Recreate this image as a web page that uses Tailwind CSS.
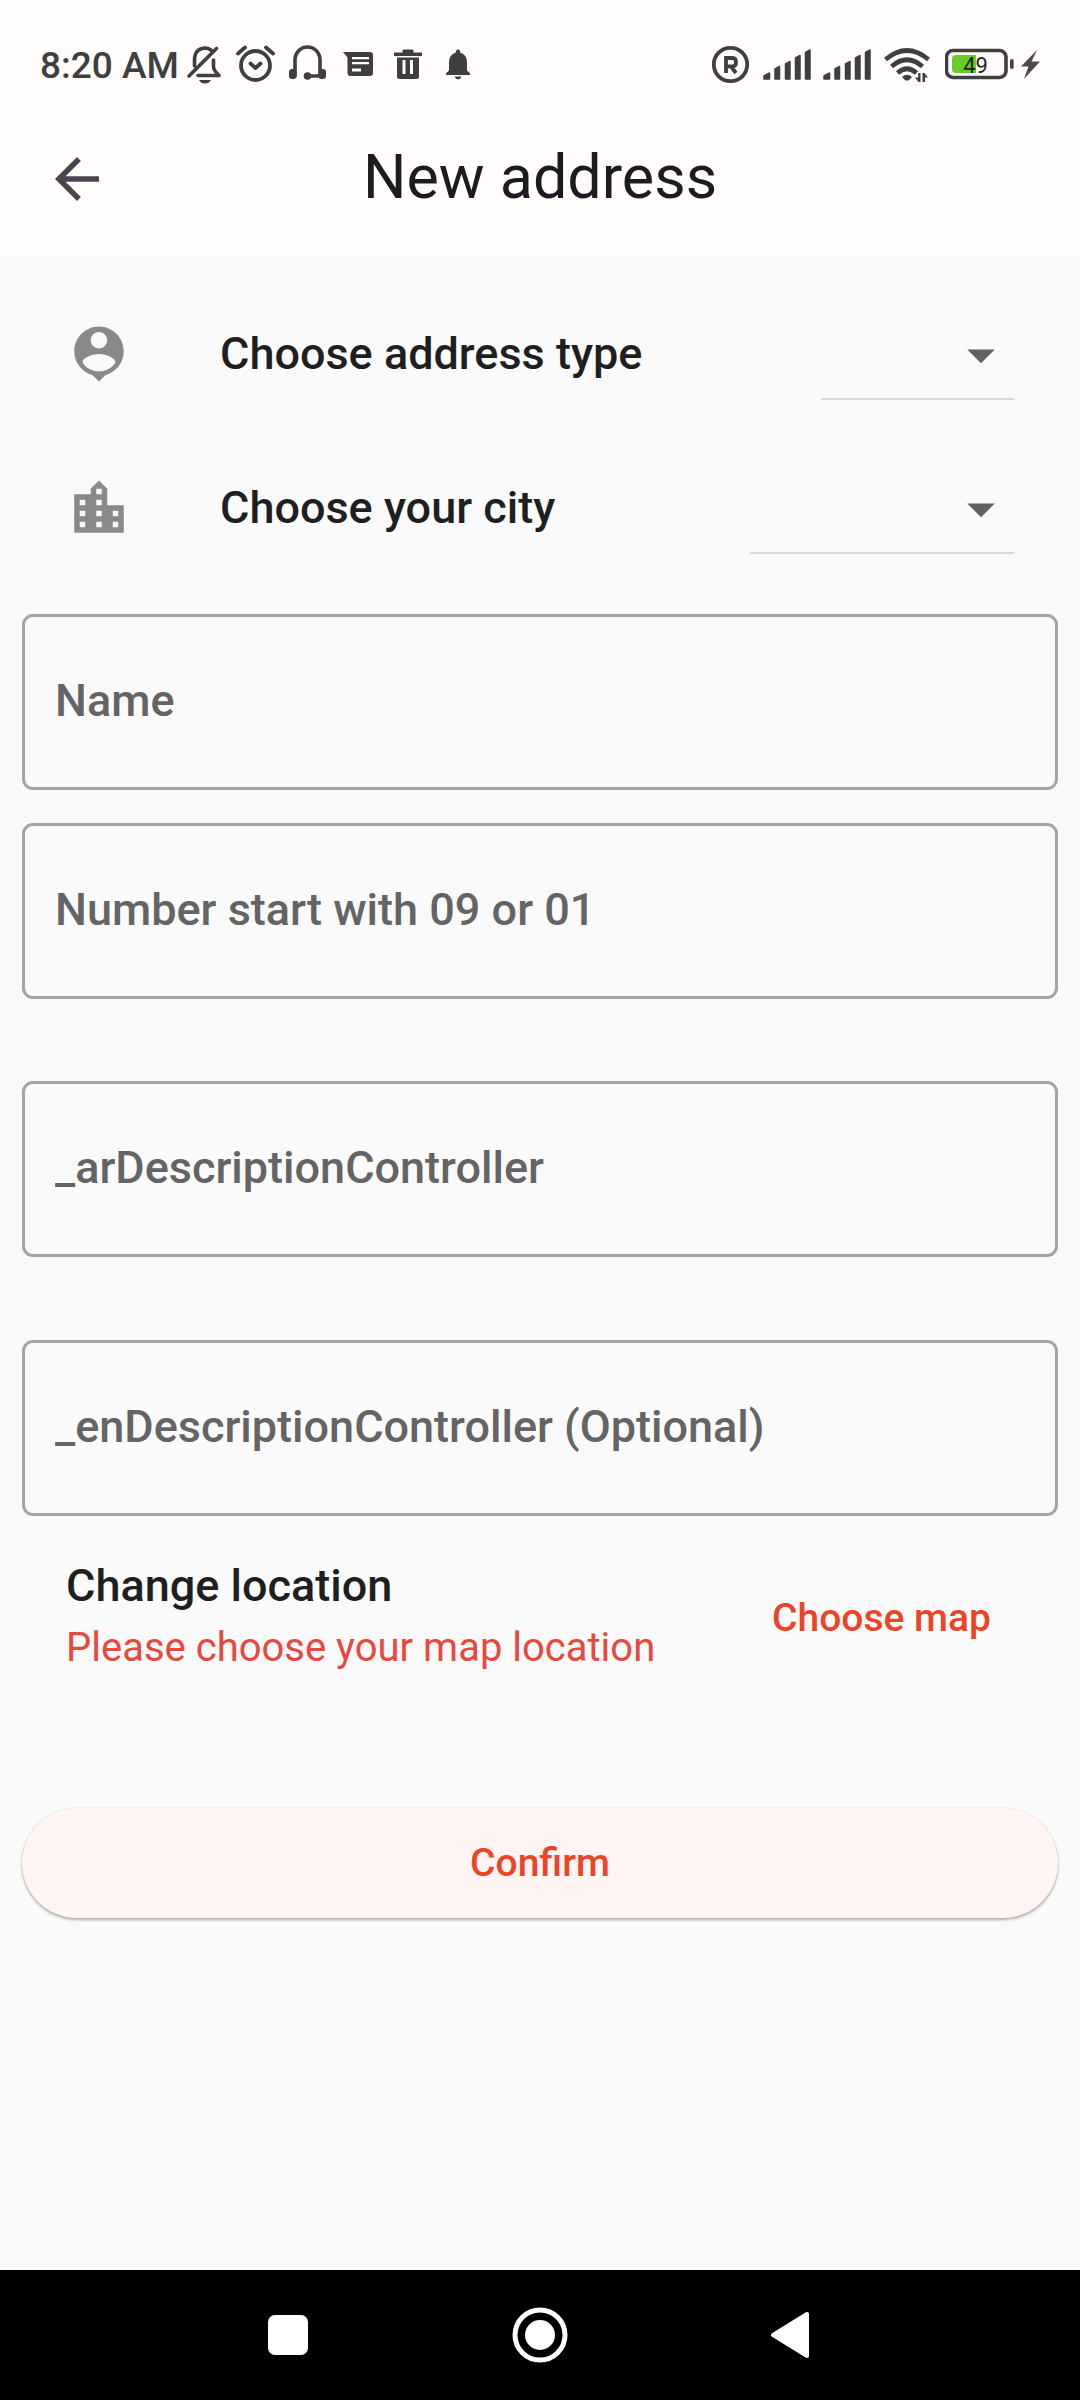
<!DOCTYPE html>
<html lang="en">
<head>
<meta charset="utf-8">
<meta name="viewport" content="width=device-width, initial-scale=1">
<title>New address</title>
<script src="https://cdn.jsdelivr.net/npm/@tailwindcss/browser@4"></script>
</head>
<body class="flex min-h-screen flex-col bg-[#fafafa] font-[Roboto,sans-serif] text-[#1f1f1f]">

<!-- Status bar and app bar -->
<header class="bg-[#fffcfb]">
  <div class="flex h-[102px] items-end justify-between pr-[39px] pb-[14px] pl-10 text-[#3f3f3f]">
    <div class="flex h-12 items-center">
      <span class="w-[146px] pt-1 text-[37px] leading-[44px] font-medium whitespace-nowrap">8:20 AM</span>
      <!-- muted bell -->
      <svg class="h-11 w-9" viewBox="186 42 36 44" fill="none" stroke="currentColor" stroke-width="3.6" stroke-linecap="round" stroke-linejoin="round" aria-hidden="true">
        <path d="M194.500 66V60q0-11 10-12 4 0 6.500 2M189 76L216.500 48.500M213.500 60v7q0 3 5.500 8.500H198"/>
        <path d="M199 80h12q-2 3.500-6 3.500t-6-3.500z" fill="currentColor" stroke="none"/>
      </svg>
      <!-- alarm -->
      <svg class="ml-[13px] h-11 w-10" viewBox="235 42 40 44" fill="none" stroke="currentColor" stroke-width="3.800" stroke-linecap="round" stroke-linejoin="round" aria-hidden="true">
        <circle cx="255.500" cy="65.500" r="14.500"/>
        <path d="M250.500 63.500l5 4.500 5-4.500M238 53.500l7-6M273 53.500l-7-6"/>
      </svg>
      <!-- headset -->
      <svg class="ml-[13px] h-11 w-10" viewBox="289 42 40 44" fill="none" stroke="currentColor" stroke-width="3.600" stroke-linecap="round" aria-hidden="true">
        <path d="M296 76V60a12.500 13 0 0 1 25 0v16M308 76h12"/>
        <circle cx="308.500" cy="76" r="3.800" fill="currentColor" stroke="none"/>
        <rect x="290" y="69" width="7.500" height="10" rx="3" fill="currentColor" stroke="none"/>
        <rect x="319.500" y="69" width="7.500" height="10" rx="3" fill="currentColor" stroke="none"/>
      </svg>
      <!-- message -->
      <svg class="ml-[13px] h-11 w-8" viewBox="343 42 32 44" fill="currentColor" aria-hidden="true">
        <path fill-rule="evenodd" d="M345 52H372q3 0 3 3V73q0 3-3 3H352.500q-3 0-3-3V57.500zM354 57v2.200h17V57zM354 62v2.200h17V62zM354 68.500v3h9v-3z"/>
      </svg>
      <!-- bin -->
      <svg class="ml-5 h-11 w-8" viewBox="395 42 32 44" fill="currentColor" aria-hidden="true">
        <path fill-rule="evenodd" d="M396 52.500h8.500v-1.500q0-1.500 1.500-1.500h8q1.500 0 1.500 1.500v1.500H424v3.500H396zM399 57.500h22V76.500q0 2.500-2.500 2.500h-17q-2.500 0-2.500-2.500zM404.500 60v14h3V60zM412 60v14h3V60z"/>
      </svg>
      <!-- bell -->
      <svg class="ml-5 h-11 w-7" viewBox="447 42 28 44" fill="currentColor" aria-hidden="true">
        <path d="M460 49.500q2.200 0 2.200 3 6.800 2 6.800 10v8l3 2.700V75H448v-1.800l3-2.700v-8q0-8 6.800-10 0-3 2.200-3zM456.500 76.500h7q-1 2.800-3.500 2.800t-3.500-2.800z"/>
      </svg>
    </div>

    <div class="flex h-12 items-center">
      <!-- roaming -->
      <svg class="h-11 w-10" viewBox="711 42 40 44" fill="none" stroke="currentColor" stroke-width="3.800" aria-hidden="true">
        <circle cx="730.500" cy="64.500" r="16.700"/>
        <path d="M726 73V58h6.500q3.500 0 3.500 4.200t-3.500 4.200H726M731 66.500l5 6.500"/>
      </svg>
      <!-- signal, SIM 1 -->
      <svg class="ml-3 h-11 w-12" viewBox="763 42 48 44" fill="currentColor" stroke="currentColor" stroke-width="1.500" stroke-linejoin="round" aria-hidden="true">
        <path d="M764 76l5.500-3v6H764zM775 69l4.500-2.500V79H775zM785.500 64l4.500-2.500V79h-4.500zM795.500 58l4.500-2.500V79h-4.500zM805.500 52.500l4.500-2.500V79h-4.500z"/>
      </svg>
      <!-- signal, SIM 2 -->
      <svg class="ml-3 h-11 w-12" viewBox="763 42 48 44" fill="currentColor" stroke="currentColor" stroke-width="1.500" stroke-linejoin="round" aria-hidden="true">
        <path d="M764 76l5.500-3v6H764zM775 69l4.500-2.500V79H775zM785.500 64l4.500-2.500V79h-4.500zM795.500 58l4.500-2.500V79h-4.500zM805.500 52.500l4.500-2.500V79h-4.500z"/>
      </svg>
      <!-- wifi -->
      <svg class="ml-3 h-11 w-12" viewBox="883 42 48 44" fill="none" stroke="currentColor" stroke-width="4.600" aria-hidden="true">
        <path d="M885.500 59.500q21.500-18 43 0M891.500 66.500q15.500-13.500 31 0M897.500 73q9.500-8.500 19 0"/>
        <path d="M902 77q5-4.500 10 0l-3.500 3.500h-3zM915 77.500h3.200V73h2.300v9h-2zM922.500 73h2l3.500 4.500h-3V82h-2.500z" fill="currentColor" stroke="none"/>
      </svg>
      <!-- battery -->
      <svg class="ml-3.5 h-11 w-[70px]" viewBox="945 42 70 44" aria-hidden="true">
        <rect x="946.500" y="50.500" width="59.500" height="27" rx="6.500" fill="none" stroke="#3f3f3f" stroke-width="3.600"/>
        <path d="M976 55v18h-20q-4 0-4-4v-10q0-4 4-4z" fill="#67cb29"/>
        <rect x="1010" y="59" width="3.600" height="10" rx="1.800" fill="#3f3f3f"/>
        <text x="975.500" y="72.500" text-anchor="middle" font-family="Roboto, sans-serif" font-size="22" fill="#222">49</text>
      </svg>
      <!-- charging -->
      <svg class="ml-1.5 h-11 w-5" viewBox="1021 42 20 44" fill="#4a4a4a" aria-hidden="true">
        <path d="M1037 50L1021 66.500h7.500L1024 79l16-17.500h-8.500z"/>
      </svg>
    </div>
  </div>

  <div class="grid h-[154px] grid-cols-[66px_1fr_66px] items-center px-11">
    <button type="button" aria-label="Back">
      <svg class="size-[66px]" viewBox="0 0 24 24" fill="#49454f" aria-hidden="true"><path d="M20 11H7.830l5.590-5.590L12 4l-8 8 8 8 1.410-1.410L7.830 13H20v-2z"/></svg>
    </button>
    <h1 class="pb-1 text-center text-[61px] leading-[76px] text-[#1c1b1f]">New address</h1>
  </div>
</header>

<main class="flex-1 px-[22px] pt-[21px]">
  <form>
    <div class="px-11 text-[45px] font-medium">
      <div class="flex h-[154px] items-center">
        <svg class="size-[66px]" viewBox="0 0 24 24" fill="#898989" aria-hidden="true"><path d="M12 2c-4.970 0-9 4.030-9 9 0 4.170 2.840 7.670 6.690 8.690L12 22l2.310-2.310C18.160 18.670 21 15.170 21 11c0-4.970-4.030-9-9-9zm0 2c1.660 0 3 1.340 3 3s-1.340 3-3 3-3-1.340-3-3 1.340-3 3-3zm0 14.300c-2.500 0-4.710-1.280-6-3.220.03-1.990 4-3.080 6-3.080 1.990 0 5.970 1.090 6 3.080-1.290 1.940-3.500 3.220-6 3.220z"/></svg>
        <label for="type" class="ml-22 flex-1">Choose address type</label>
        <div class="relative">
          <select id="type" class="block h-[92px] w-[193px] appearance-none border-b-2 border-[#d9d9d9] pr-[66px] outline-none"></select>
          <svg class="pointer-events-none absolute top-3.5 right-0 size-[66px]" viewBox="0 0 24 24" fill="#616161" aria-hidden="true"><path d="M7 10l5 5 5-5z"/></svg>
        </div>
      </div>
      <div class="flex h-[154px] items-center">
        <svg class="size-[66px]" viewBox="0 0 24 24" fill="#898989" aria-hidden="true"><path d="M15 11V5l-3-3-3 3v2H3v14h18V11h-6zm-8 8H5v-2h2v2zm0-4H5v-2h2v2zm0-4H5V9h2v2zm6 8h-2v-2h2v2zm0-4h-2v-2h2v2zm0-4h-2V9h2v2zm0-4h-2V5h2v2zm6 12h-2v-2h2v2zm0-4h-2v-2h2v2z"/></svg>
        <label for="city" class="ml-22 flex-1">Choose your city</label>
        <div class="relative">
          <select id="city" class="block h-[92px] w-[264px] appearance-none border-b-2 border-[#d9d9d9] pr-[66px] outline-none"></select>
          <svg class="pointer-events-none absolute top-3.5 right-0 size-[66px]" viewBox="0 0 24 24" fill="#616161" aria-hidden="true"><path d="M7 10l5 5 5-5z"/></svg>
        </div>
      </div>
    </div>

    <div class="mt-[29px] text-[45px] font-medium">
      <input type="text" aria-label="Name" placeholder="Name" class="block h-44 w-full rounded-[11px] border-3 border-[#a4a4a4] px-[30px] pb-1 outline-none placeholder:text-[#646464]">
      <input type="tel" aria-label="Number start with 09 or 01" placeholder="Number start with 09 or 01" class="mt-[33px] block h-44 w-full rounded-[11px] border-3 border-[#a4a4a4] px-[30px] pb-1 outline-none placeholder:text-[#646464]">
      <input type="text" aria-label="_arDescriptionController" placeholder="_arDescriptionController" class="mt-[82px] block h-44 w-full rounded-[11px] border-3 border-[#a4a4a4] px-[30px] pb-1 outline-none placeholder:text-[#646464]">
      <input type="text" aria-label="_enDescriptionController (Optional)" placeholder="_enDescriptionController (Optional)" class="mt-[83px] block h-44 w-full rounded-[11px] border-3 border-[#a4a4a4] px-[30px] pb-1 outline-none placeholder:text-[#646464]">
    </div>

    <div class="mt-10 flex items-center justify-between pr-[67px] pl-11">
      <div>
        <h2 class="text-[45px] leading-[60px] font-medium">Change location</h2>
        <p class="text-[40px] leading-[64px] text-[#e8483e]">Please choose your map location</p>
      </div>
      <button type="button" class="text-[39px] leading-[60px] font-medium text-[#ec4427]">Choose map</button>
    </div>

    <button type="submit" class="mt-32 block h-[110px] w-full rounded-full bg-[#fff5f3] text-[39px] font-medium text-[#ec4427] shadow-[0_2px_3px_rgba(0,0,0,0.3),0_0_2px_rgba(0,0,0,0.1)]">Confirm</button>
  </form>
</main>

<!-- System navigation -->
<nav aria-label="System" class="grid h-[130px] grid-cols-3 items-center bg-black px-[15%] text-white">
  <button type="button" aria-label="Recent apps" class="flex justify-center">
    <svg class="size-14" viewBox="0 0 56 56" fill="currentColor"><rect x="8" y="8" width="40" height="40" rx="7"/></svg>
  </button>
  <button type="button" aria-label="Home" class="flex justify-center">
    <svg class="size-14" viewBox="0 0 56 56" fill="currentColor"><circle cx="28" cy="28" r="25" fill="none" stroke="currentColor" stroke-width="5"/><circle cx="28" cy="28" r="15"/></svg>
  </button>
  <button type="button" aria-label="Back one screen" class="flex justify-center">
    <svg class="size-14" viewBox="0 0 56 56" fill="currentColor" stroke="currentColor" stroke-width="4" stroke-linejoin="round"><path d="M9 28L43 7v42z"/></svg>
  </button>
</nav>
</body>
</html>
